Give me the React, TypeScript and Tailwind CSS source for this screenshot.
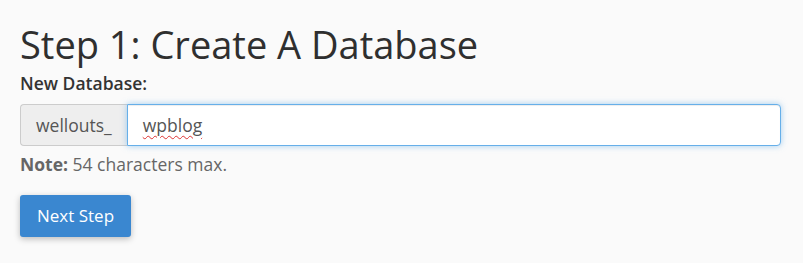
export default function App() {
  return (
    <div className="min-h-[263px] w-full bg-[#fafafa] px-5 pt-[21px] font-['Open_Sans',sans-serif] text-[#333]">
      <h1 className="text-[38px] leading-[46px] text-[#2f2f2f]">Step 1: Create A Database</h1>

      <label className="mt-[5px] block text-[17.5px] font-semibold leading-[22px] text-[#333]">New Database:</label>

      <div className="mt-[10px] flex h-[42px] w-[761px]">
        <span className="flex items-center rounded-l-[4px] border border-r-0 border-[#ccc] bg-[#eeeeee] px-[15px] text-[17.5px] text-[#555]">
          wellouts_
        </span>
        <div className="flex flex-1 items-center rounded-r-[4px] border border-[#66afe9] bg-white px-[15px] text-[17.5px] text-[#555] shadow-[inset_0_1px_1px_rgba(0,0,0,0.075),0_0_6px_rgba(102,175,233,0.6)]">
          <span className="underline decoration-[#d33] decoration-wavy decoration-1 underline-offset-[3px]">wpblog</span>
        </div>
      </div>

      <p className="mt-[6px] text-[17.5px] leading-[24px] text-[#666]">
        <span className="font-bold">Note:</span> 54 characters max.
      </p>

      <button className="mt-[19px] h-[42px] rounded-[3px] bg-[#3a87d0] px-[17px] text-[17px] text-white shadow-[0_2px_6px_rgba(0,0,0,0.25)]">
        Next Step
      </button>
    </div>
  );
}
